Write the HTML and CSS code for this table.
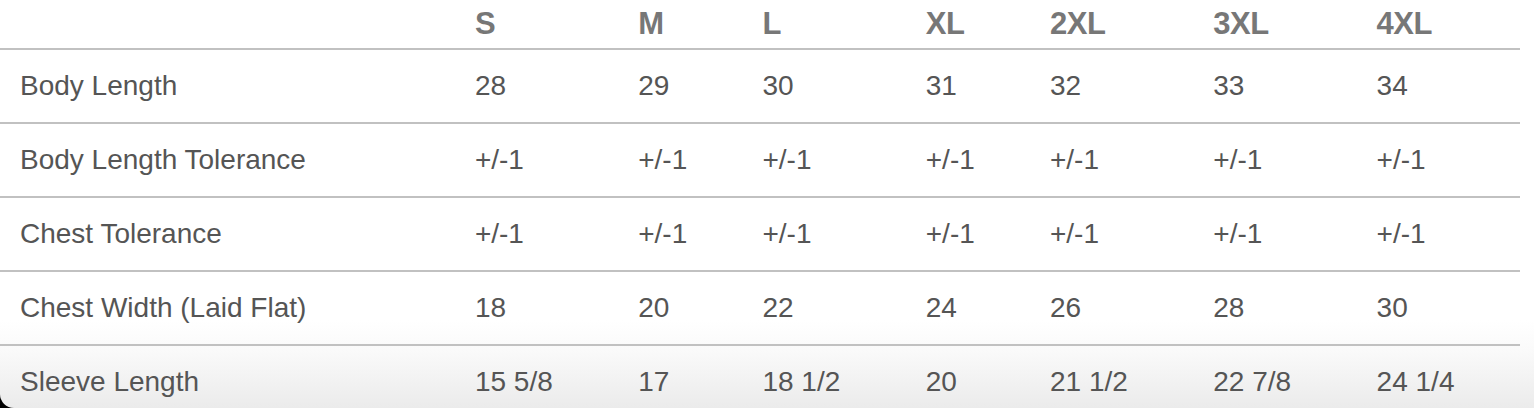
FILE: index.html
```html
<!DOCTYPE html>
<html lang="en">
<head>
<meta charset="utf-8">
<title>Size Chart</title>
<link rel="stylesheet" href="styles.css">
</head>
<body>
<div class="frame">
  <table class="sizes">
    <colgroup>
      <col class="c-label">
      <col class="c-wide">
      <col class="c-narrow">
      <col class="c-wide">
      <col class="c-narrow">
      <col class="c-wide">
      <col class="c-wide">
      <col class="c-wide">
    </colgroup>
    <thead>
      <tr>
        <th></th><th>S</th><th>M</th><th>L</th><th>XL</th><th>2XL</th><th>3XL</th><th>4XL</th>
      </tr>
    </thead>
    <tbody>
      <tr><td>Body Length</td><td>28</td><td>29</td><td>30</td><td>31</td><td>32</td><td>33</td><td>34</td></tr>
      <tr><td>Body Length Tolerance</td><td>+/-1</td><td>+/-1</td><td>+/-1</td><td>+/-1</td><td>+/-1</td><td>+/-1</td><td>+/-1</td></tr>
      <tr><td>Chest Tolerance</td><td>+/-1</td><td>+/-1</td><td>+/-1</td><td>+/-1</td><td>+/-1</td><td>+/-1</td><td>+/-1</td></tr>
      <tr><td>Chest Width (Laid Flat)</td><td>18</td><td>20</td><td>22</td><td>24</td><td>26</td><td>28</td><td>30</td></tr>
      <tr class="last"><td>Sleeve Length</td><td>15 5/8</td><td>17</td><td>18 1/2</td><td>20</td><td>21 1/2</td><td>22 7/8</td><td>24 1/4</td></tr>
    </tbody>
  </table>
</div>
</body>
</html>
```

FILE: styles.css
```css
html, body {
  margin: 0;
  padding: 0;
  background: #000;
}

.frame {
  width: 1534px;
  height: 408px;
  overflow: hidden;
  border-bottom-left-radius: 14px;
  background: linear-gradient(to bottom, #ffffff 0, #ffffff 320px, #fafafa 350px, #ebebeb 408px);
}

.sizes {
  width: 1520px;
  table-layout: fixed;
  border-collapse: collapse;
  font-family: "Liberation Sans", Arial, Helvetica, sans-serif;
  font-size: 28px;
}

.c-label { width: 454px; }
.c-wide { width: 163px; }
.c-narrow { width: 124px; }

.sizes th,
.sizes td {
  padding: 0 0 0 20px;
  text-align: left;
  white-space: nowrap;
}

.sizes th {
  height: 48px;
  font-size: 31px;
  font-weight: bold;
  letter-spacing: -0.5px;
  color: #777777;
  border-bottom: 2px solid #c1c1c1;
}

.sizes td {
  height: 72px;
  color: #555555;
  border-bottom: 2px solid #c1c1c1;
}

.sizes tr.last td {
  border-bottom: none;
}
```
